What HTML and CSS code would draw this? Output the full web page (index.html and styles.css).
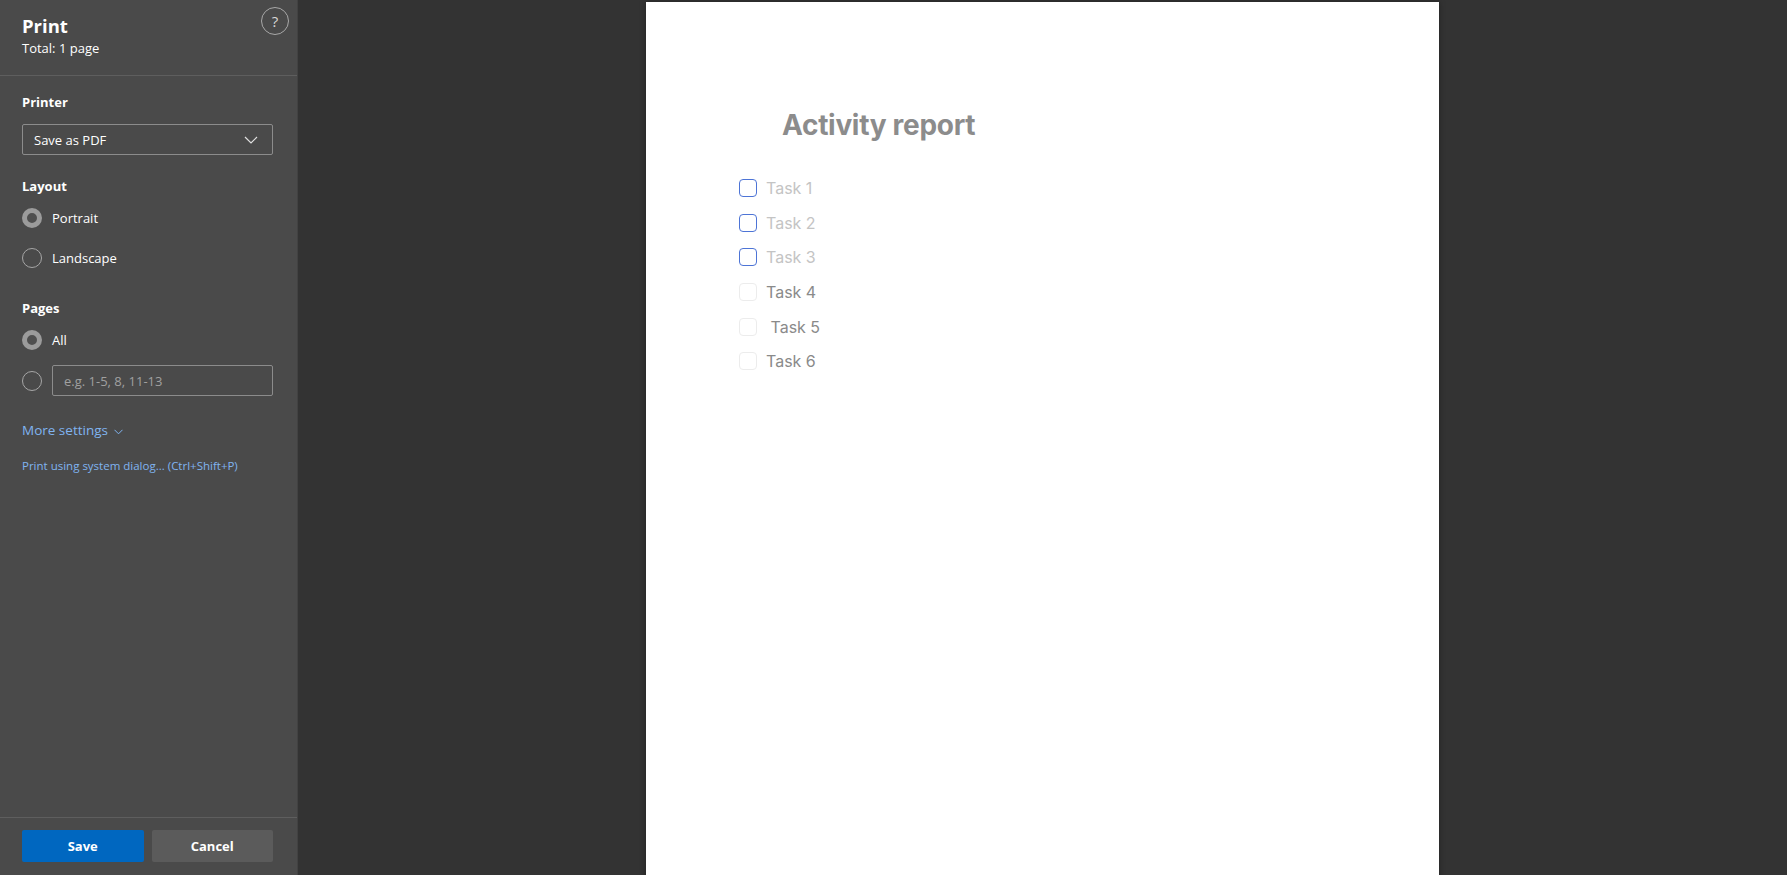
FILE: index.html
```html
<!DOCTYPE html>
<html lang="en">
<head>
  <meta charset="UTF-8" />
  <title>Print</title>
  <link rel="stylesheet" href="styles.css">
</head>
<body>
  <div class="app">
    <aside class="sidebar">
      <div class="sidebar-head">
        <div>
          <div class="title">Print</div>
          <div class="subtitle">Total: 1 page</div>
        </div>
        <div class="help">?</div>
      </div>

      <div class="sidebar-body">
        <div class="label label-printer">Printer</div>
        <div class="select">
          <span>Save as PDF</span>
          <svg width="14" height="8" viewBox="0 0 14 8"><polyline points="1,1 7,7 13,1" fill="none" stroke="#e0e0e0" stroke-width="1.2"/></svg>
        </div>

        <div class="label label-layout">Layout</div>
        <div class="radio-row">
          <span class="radio checked"></span>
          <span>Portrait</span>
        </div>
        <div class="radio-row">
          <span class="radio"></span>
          <span>Landscape</span>
        </div>

        <div class="label label-pages">Pages</div>
        <div class="radio-row">
          <span class="radio checked"></span>
          <span>All</span>
        </div>
        <div class="radio-row range-row">
          <span class="radio"></span>
          <div class="range-input">e.g. 1-5, 8, 11-13</div>
        </div>

        <div class="more">
          More settings
          <svg width="9" height="6" viewBox="0 0 9 6"><polyline points="0.5,0.8 4.5,4.8 8.5,0.8" fill="none" stroke="#80b4f0" stroke-width="1"/></svg>
        </div>
        <div class="system">Print using system dialog... (Ctrl+Shift+P)</div>
      </div>

      <div class="sidebar-foot">
        <button class="btn btn-save">Save</button>
        <button class="btn btn-cancel">Cancel</button>
      </div>
    </aside>

    <main class="preview">
      <div class="page">
        <h1 class="report-title">Activity report</h1>
        <ul class="tasks">
          <li class="task done"><span class="box"></span>Task 1</li>
          <li class="task done"><span class="box"></span>Task 2</li>
          <li class="task done"><span class="box"></span>Task 3</li>
          <li class="task"><span class="box"></span>Task 4</li>
          <li class="task"><span class="box"></span>&nbsp;Task 5</li>
          <li class="task"><span class="box"></span>Task 6</li>
        </ul>
      </div>
    </main>
  </div>
</body>
</html>
```

FILE: styles.css
```css
* {
  box-sizing: border-box;
}
html, body {
  margin: 0;
  height: 100%;
  overflow: hidden;
}
body {
  font-family: "Open Sans", "Noto Sans", sans-serif;
  background: #333333;
  color: #fff;
}
.app {
  display: flex;
  height: 875px;
}
.sidebar {
  width: 298px;
  flex-shrink: 0;
  background: #4a4a4a;
  display: flex;
  flex-direction: column;
  border-right: 1px solid #424242;
}
.sidebar-head {
  display: flex;
  justify-content: space-between;
  align-items: flex-start;
  padding: 13px 8px 0 22px;
  height: 76px;
  border-bottom: 1px solid #5e5e5e;
}
.title {
  font-size: 18.5px;
  font-weight: 700;
  line-height: 26px;
}
.subtitle {
  font-size: 13px;
  line-height: 18px;
}
.help {
  width: 28px;
  height: 28px;
  margin-top: -6px;
  border: 1px solid #a8a8a8;
  border-radius: 50%;
  display: flex;
  align-items: center;
  justify-content: center;
  font-size: 15px;
  color: #d8d8d8;
}
.sidebar-body {
  padding: 0 24px 0 22px;
  flex: 1;
}
.label {
  font-size: 13px;
  font-weight: 700;
  line-height: 18px;
}
.label-printer {
  margin-top: 17px;
}
.select {
  margin-top: 13px;
  height: 31px;
  border: 1px solid #8c8c8c;
  border-radius: 2px;
  display: flex;
  align-items: center;
  justify-content: space-between;
  padding: 0 14px 0 11px;
  font-size: 13px;
}
.label-layout {
  margin-top: 22px;
}
.label-pages {
  margin-top: 31px;
}
.radio-row {
  display: flex;
  align-items: center;
  gap: 10px;
  height: 20px;
  margin-top: 13px;
  font-size: 13px;
}
.radio-row + .radio-row {
  margin-top: 20px;
}
.radio-row.range-row {
  height: 31px;
  margin-top: 15px;
}
.radio {
  width: 20px;
  height: 20px;
  border-radius: 50%;
  border: 1px solid #a6a6a6;
  flex-shrink: 0;
}
.radio.checked {
  border: 5px solid #9b9b9b;
  background: #4f4f4f;
}
.range-input {
  flex: 1;
  height: 31px;
  border: 1px solid #8c8c8c;
  border-radius: 2px;
  display: flex;
  align-items: center;
  padding-left: 11px;
  color: #a0a0a0;
  font-size: 13px;
}
.more {
  margin-top: 25px;
  color: #80b4f0;
  font-size: 13.5px;
  display: flex;
  align-items: center;
  gap: 6px;
}
.more svg {
  margin-top: 3px;
}
.system {
  margin-top: 19px;
  color: #80b4f0;
  font-size: 11.5px;
}
.sidebar-foot {
  border-top: 1px solid #5e5e5e;
  display: flex;
  gap: 8px;
  padding: 12px 24px 13px 22px;
}
.btn {
  flex: 1;
  height: 32px;
  border: none;
  border-radius: 2px;
  font-family: inherit;
  font-size: 13px;
  font-weight: 700;
  color: #fff;
}
.btn-save {
  background: #0067c0;
}
.btn-cancel {
  background: #5b5b5b;
}
.preview {
  flex: 1;
  display: flex;
  justify-content: center;
  overflow: hidden;
}
.page {
  width: 793px;
  height: 1122px;
  margin-top: 2px;
  background: #fff;
  box-shadow: 0 0 6px rgba(0, 0, 0, 0.35);
  padding: 105px 0 0 93px;
  font-family: Inter, "Liberation Sans", sans-serif;
}
.report-title {
  margin: 0 0 0 43px;
  font-size: 28px;
  font-weight: 700;
  color: #8c8c8c;
  letter-spacing: -0.3px;
  line-height: 36px;
}
.tasks {
  list-style: none;
  margin: 28px 0 0;
  padding: 0;
}
.task {
  display: flex;
  align-items: center;
  height: 34.6px;
  font-size: 16px;
  color: #8a8a8a;
}
.task .box {
  width: 18px;
  height: 18px;
  border: 1px solid #ececec;
  border-radius: 4px;
  margin-right: 9px;
}
.task.done {
  color: #c4c4c4;
}
.task.done .box {
  border: 1.6px solid #4d74d6;
}
```
